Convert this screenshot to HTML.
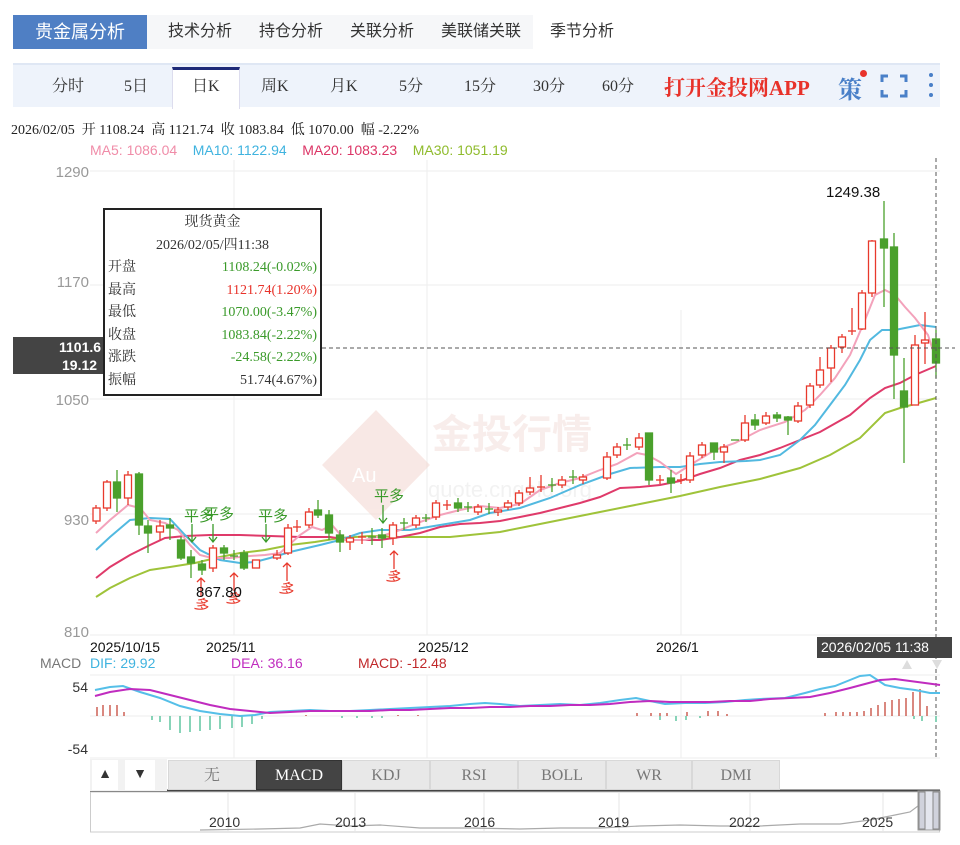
<!DOCTYPE html>
<html><head><meta charset="utf-8"><style>
*{margin:0;padding:0;box-sizing:border-box}
body{width:960px;height:845px;background:#fff;position:relative;overflow:hidden;font-family:"Liberation Serif","Noto Serif CJK SC",serif;color:#333}
.abs{position:absolute}
.topbar{left:13px;top:15px;width:520px;height:34px;background:#f6f7f9}
.toptab{left:13px;top:15px;width:134px;height:34px;background:#4f7fc4;color:#fff;font-size:18px;line-height:34px;text-align:center;font-family:"Liberation Sans","Noto Sans CJK SC",sans-serif}
.topitem{top:15px;line-height:34px;font-size:16px;font-family:"Liberation Sans","Noto Sans CJK SC",sans-serif;color:#333}
.pbar{left:13px;top:63px;width:927px;height:44px;background:#eef3fb;border-top:2px solid #dfe7f4}
.pitem{top:75px;font-size:16px;line-height:24px}
.active{left:172px;top:67px;width:68px;height:42px;background:#fff;border-top:3px solid #1e2a78;border-left:1px solid #dde;border-right:1px solid #dde}
.sans{font-family:"Liberation Sans",sans-serif}
.tab{top:760px;height:30px;background:#e8e8e8;border:1px solid #d8d8d8;font-size:16px;line-height:30px;text-align:center;color:#777}
</style></head><body>
<div class="abs topbar"></div>
<div class="abs toptab">贵金属分析</div>
<div class="abs topitem" style="left:168px">技术分析</div>
<div class="abs topitem" style="left:259px">持仓分析</div>
<div class="abs topitem" style="left:350px">关联分析</div>
<div class="abs topitem" style="left:441px">美联储关联</div>
<div class="abs topitem" style="left:550px">季节分析</div>

<div class="abs pbar"></div>
<div class="abs active"></div>
<div class="abs pitem" style="left:52px">分时</div>
<div class="abs pitem" style="left:124px">5日</div>
<div class="abs pitem" style="left:192px">日K</div>
<div class="abs pitem" style="left:261px">周K</div>
<div class="abs pitem" style="left:330px">月K</div>
<div class="abs pitem" style="left:399px">5分</div>
<div class="abs pitem" style="left:464px">15分</div>
<div class="abs pitem" style="left:533px">30分</div>
<div class="abs pitem" style="left:602px">60分</div>
<div class="abs" style="left:664px;top:72px;font-size:21px;font-weight:bold;color:#e8322a">打开金投网APP</div>
<div class="abs" style="left:838px;top:70px;font-size:24px;color:#4a80c8;font-weight:bold">策</div>
<div class="abs" style="left:860px;top:70px;width:7px;height:7px;border-radius:50%;background:#e8322a"></div>
<svg class="abs" style="left:880px;top:74px" width="28" height="24"><path d="M2 8V2h6M20 2h6v6M26 16v6h-6M8 22H2v-6" stroke="#4a80c8" stroke-width="3" fill="none"/></svg>
<svg class="abs" style="left:926px;top:72px" width="10" height="26"><circle cx="5" cy="3" r="2" fill="#4a80c8"/><circle cx="5" cy="13" r="2" fill="#4a80c8"/><circle cx="5" cy="23" r="2" fill="#4a80c8"/></svg>

<div class="abs" style="left:11px;top:119px;font-size:14px;color:#222">2026/02/05&nbsp; 开 1108.24&nbsp; 高 1121.74&nbsp; 收 1083.84&nbsp; 低 1070.00&nbsp; 幅 -2.22%</div>
<div class="abs sans" style="left:90px;top:142px;font-size:14px;white-space:nowrap"><span style="color:#f08ca8">MA5: 1086.04</span>&nbsp;&nbsp;&nbsp; <span style="color:#3fb3df">MA10: 1122.94</span>&nbsp;&nbsp;&nbsp; <span style="color:#dc3566">MA20: 1083.23</span>&nbsp;&nbsp;&nbsp; <span style="color:#8fbb2c">MA30: 1051.19</span></div>

<svg class="abs" style="left:0;top:0" width="960" height="845" font-family="Liberation Sans,sans-serif">
<g stroke="#eee" stroke-width="1">
<line x1="90" y1="171" x2="940" y2="171"/><line x1="90" y1="285" x2="940" y2="285"/><line x1="90" y1="399" x2="940" y2="399"/><line x1="90" y1="514" x2="940" y2="514"/><line x1="90" y1="635" x2="940" y2="635"/>
<line x1="234" y1="160" x2="234" y2="635"/><line x1="427" y1="160" x2="427" y2="635"/><line x1="681" y1="310" x2="681" y2="635"/>
<line x1="90" y1="675" x2="940" y2="675"/><line x1="90" y1="758" x2="940" y2="758"/>
<line x1="234" y1="675" x2="234" y2="758"/><line x1="427" y1="675" x2="427" y2="758"/><line x1="681" y1="675" x2="681" y2="758"/>
</g>
<g fill="#999" font-size="15" text-anchor="end"><text x="89" y="177">1290</text><text x="89" y="287">1170</text><text x="89" y="405">1050</text><text x="89" y="525">930</text><text x="89" y="637">810</text></g>
<!-- watermark -->
<g opacity="0.5">
<path d="M376 410 L430 465 L376 520 L322 465Z" fill="#f3d3cc"/>
<text x="432" y="448" font-size="40" fill="#f3dcd8" font-family="Noto Sans CJK SC,sans-serif" font-weight="bold">金投行情</text>
<text x="428" y="497" font-size="22" fill="#e6e6e6">quote.cngold.org</text>
<text x="352" y="482" font-size="20" fill="#fff">Au</text>
</g>
<!-- MA lines -->
<g fill="none" stroke-width="2">
<polyline stroke="#9fc33a" points="96,597 110,588 130,578 150,570 170,567 195,563 220,557 240,553 265,550 290,545 315,542 340,538 370,536 400,537 430,537 450,537 480,534 500,532 530,526 560,520 600,512 640,504 680,496 720,487 760,479 800,468 830,455 860,438 885,413 900,408 915,404 936,398"/>
<polyline stroke="#df3a6a" points="96,578 110,567 130,555 150,545 165,538 185,536 210,535 240,535 270,536 300,537 330,537 350,540 380,540 400,537 420,533 440,527 460,524 480,523 500,521 520,517 540,513 560,508 580,503 600,497 620,488 640,487 660,485 680,481 700,474 720,468 740,460 760,455 780,448 800,440 820,432 850,415 870,398 885,388 900,383 915,375 936,366"/>
<polyline stroke="#52b9e0" points="96,550 110,537 130,520 150,518 170,519 185,535 200,550 220,560 240,563 255,562 270,558 290,552 320,545 340,540 360,533 380,530 410,530 440,525 470,520 490,513 520,508 550,498 580,485 610,474 630,468 660,467 680,467 700,464 720,462 746,461 760,460 780,455 800,440 815,425 830,405 845,385 860,360 870,340 882,330 895,330 905,328 920,325 936,327"/>
<polyline stroke="#f3a2bb" points="96,533 110,520 128,505 140,508 150,520 165,523 178,530 190,545 200,555 212,558 230,558 250,556 265,555 280,553 300,535 312,527 322,530 332,525 345,540 365,540 385,535 400,530 420,522 440,515 460,510 480,506 500,508 520,504 540,490 560,483 580,478 600,470 617,464 637,453 647,455 660,462 676,474 695,462 715,450 735,443 760,430 785,422 805,410 820,395 835,378 850,355 865,320 875,295 885,290 895,295 905,307 915,318 928,335 936,360"/>
</g>
<!-- candles red -->
<g stroke="#e8392c" stroke-width="1.3" fill="#fff">
<line x1="96" y1="505" x2="96" y2="524"/><rect x="93" y="508" width="7" height="13"/>
<line x1="107" y1="480" x2="107" y2="511"/><rect x="103.5" y="482" width="7" height="26"/>
<line x1="128" y1="471" x2="128" y2="505"/><rect x="124.5" y="475" width="7" height="23"/>
<line x1="160" y1="520" x2="160" y2="540"/><rect x="156.5" y="526" width="7" height="6"/>
<line x1="213" y1="545" x2="213" y2="572"/><rect x="209.5" y="548" width="7" height="20"/>
<rect x="252.5" y="560" width="7" height="8"/>
<line x1="277" y1="550" x2="277" y2="560"/><rect x="273.5" y="555" width="7" height="3"/>
<line x1="288" y1="524" x2="288" y2="555"/><rect x="284.5" y="528" width="7" height="25"/>
<line x1="297" y1="520" x2="297" y2="532"/><line x1="293" y1="527" x2="301" y2="527"/>
<line x1="309" y1="508" x2="309" y2="528"/><rect x="305.5" y="512" width="7" height="13"/>
<line x1="350" y1="535" x2="350" y2="550"/><rect x="346.5" y="538" width="7" height="4"/>
<line x1="362" y1="532" x2="362" y2="544"/><line x1="358" y1="537" x2="366" y2="537"/>
<line x1="393" y1="522" x2="393" y2="545"/><rect x="389.5" y="525" width="7" height="13"/>
<line x1="416" y1="515" x2="416" y2="528"/><rect x="412.5" y="518" width="7" height="7"/>
<line x1="436" y1="500" x2="436" y2="520"/><rect x="432.5" y="503" width="7" height="14"/>
<line x1="447" y1="500" x2="447" y2="510"/><line x1="443" y1="505" x2="451" y2="505"/>
<line x1="478" y1="504" x2="478" y2="515"/><rect x="474.5" y="507" width="7" height="5"/>
<line x1="498" y1="507" x2="498" y2="516"/><rect x="494.5" y="510" width="7" height="2"/>
<line x1="508" y1="500" x2="508" y2="510"/><rect x="504.5" y="503" width="7" height="4"/>
<line x1="519" y1="490" x2="519" y2="506"/><rect x="515.5" y="493" width="7" height="10"/>
<line x1="530" y1="477" x2="530" y2="495"/><rect x="526.5" y="488" width="7" height="4"/>
<line x1="541" y1="475" x2="541" y2="492"/><line x1="537" y1="487" x2="545" y2="487"/>
<line x1="562" y1="476" x2="562" y2="488"/><rect x="558.5" y="480" width="7" height="5"/>
<line x1="583" y1="474" x2="583" y2="484"/><rect x="579.5" y="477" width="7" height="3"/>
<line x1="607" y1="452" x2="607" y2="480"/><rect x="603.5" y="457" width="7" height="21"/>
<line x1="617" y1="443" x2="617" y2="458"/><rect x="613.5" y="447" width="7" height="8"/>
<line x1="639" y1="433" x2="639" y2="450"/><rect x="635.5" y="438" width="7" height="9"/>
<line x1="660" y1="475" x2="660" y2="484"/><line x1="656" y1="480" x2="664" y2="480"/>
<line x1="681" y1="474" x2="681" y2="484"/><line x1="677" y1="480" x2="685" y2="480"/>
<line x1="690" y1="452" x2="690" y2="483"/><rect x="686.5" y="456" width="7" height="24"/>
<line x1="702" y1="442" x2="702" y2="458"/><rect x="698.5" y="445" width="7" height="10"/>
<line x1="724" y1="444" x2="724" y2="463"/><rect x="720.5" y="447" width="7" height="5"/>
<line x1="745" y1="415" x2="745" y2="442"/><rect x="741.5" y="423" width="7" height="17"/>
<line x1="766" y1="412" x2="766" y2="425"/><rect x="762.5" y="416" width="7" height="7"/>
<line x1="798" y1="402" x2="798" y2="423"/><rect x="794.5" y="406" width="7" height="15"/>
<line x1="810" y1="383" x2="810" y2="408"/><rect x="806.5" y="386" width="7" height="19"/>
<line x1="820" y1="357" x2="820" y2="388"/><rect x="816.5" y="370" width="7" height="15"/>
<line x1="831" y1="345" x2="831" y2="382"/><rect x="827.5" y="348" width="7" height="20"/>
<line x1="842" y1="334" x2="842" y2="353"/><rect x="838.5" y="337" width="7" height="10"/>
<line x1="852" y1="308" x2="852" y2="335"/><line x1="848" y1="331" x2="856" y2="331"/>
<line x1="862" y1="290" x2="862" y2="330"/><rect x="858.5" y="293" width="7" height="36"/>
<line x1="872" y1="240" x2="872" y2="297"/><rect x="868.5" y="241" width="7" height="52"/>
<line x1="915" y1="335" x2="915" y2="405"/><rect x="911.5" y="345" width="7" height="60"/>
<line x1="925" y1="312" x2="925" y2="364"/><rect x="921.5" y="340" width="7" height="3"/>
</g>
<!-- candles green -->
<g stroke="#4aa02c" stroke-width="1.3" fill="#4aa02c">
<line x1="117" y1="470" x2="117" y2="512"/><rect x="113.5" y="482" width="7" height="16"/>
<line x1="139" y1="472" x2="139" y2="535"/><rect x="135.5" y="474" width="7" height="51"/>
<line x1="148" y1="520" x2="148" y2="553"/><rect x="144.5" y="526" width="7" height="7"/>
<line x1="170" y1="518" x2="170" y2="540"/><rect x="166.5" y="525" width="7" height="3"/>
<line x1="181" y1="537" x2="181" y2="560"/><rect x="177.5" y="540" width="7" height="18"/>
<line x1="191" y1="550" x2="191" y2="578"/><rect x="187.5" y="557" width="7" height="6"/>
<line x1="202" y1="560" x2="202" y2="575"/><rect x="198.5" y="564" width="7" height="6"/>
<line x1="224" y1="545" x2="224" y2="560"/><rect x="220.5" y="548" width="7" height="5"/>
<line x1="234" y1="550" x2="234" y2="560"/><line x1="230" y1="556" x2="238" y2="556"/>
<line x1="244" y1="550" x2="244" y2="570"/><rect x="240.5" y="553" width="7" height="15"/>
<line x1="318" y1="500" x2="318" y2="518"/><rect x="314.5" y="510" width="7" height="5"/>
<line x1="329" y1="510" x2="329" y2="540"/><rect x="325.5" y="515" width="7" height="18"/>
<line x1="340" y1="530" x2="340" y2="552"/><rect x="336.5" y="535" width="7" height="7"/>
<line x1="372" y1="528" x2="372" y2="545"/><line x1="368" y1="537" x2="376" y2="537"/>
<line x1="382" y1="528" x2="382" y2="548"/><rect x="378.5" y="535" width="7" height="3"/>
<line x1="404" y1="518" x2="404" y2="530"/><line x1="400" y1="523" x2="408" y2="523"/>
<line x1="426" y1="514" x2="426" y2="522"/><line x1="422" y1="518" x2="430" y2="518"/>
<line x1="458" y1="498" x2="458" y2="512"/><rect x="454.5" y="503" width="7" height="5"/>
<line x1="468" y1="502" x2="468" y2="512"/><line x1="464" y1="507" x2="472" y2="507"/>
<line x1="489" y1="503" x2="489" y2="514"/><line x1="485" y1="509" x2="493" y2="509"/>
<line x1="552" y1="478" x2="552" y2="492"/><line x1="548" y1="485" x2="556" y2="485"/>
<line x1="573" y1="470" x2="573" y2="484"/><line x1="569" y1="477" x2="577" y2="477"/>
<line x1="627" y1="438" x2="627" y2="450"/><line x1="623" y1="445" x2="631" y2="445"/>
<line x1="649" y1="433" x2="649" y2="485"/><rect x="645.5" y="433" width="7" height="47"/>
<line x1="671" y1="470" x2="671" y2="493"/><rect x="667.5" y="478" width="7" height="5"/>
<line x1="714" y1="443" x2="714" y2="460"/><rect x="710.5" y="443" width="7" height="9"/>
<line x1="735" y1="440" x2="735" y2="440"/><line x1="731" y1="440" x2="739" y2="440"/>
<line x1="755" y1="414" x2="755" y2="430"/><rect x="751.5" y="420" width="7" height="5"/>
<line x1="777" y1="412" x2="777" y2="422"/><rect x="773.5" y="415" width="7" height="3"/>
<line x1="788" y1="416" x2="788" y2="435"/><rect x="784.5" y="417" width="7" height="3"/>
<line x1="884" y1="201" x2="884" y2="307"/><rect x="880.5" y="239" width="7" height="9"/>
<line x1="894" y1="233" x2="894" y2="399"/><rect x="890.5" y="247" width="7" height="108"/>
<line x1="904" y1="358" x2="904" y2="463"/><rect x="900.5" y="391" width="7" height="16"/>
<line x1="936" y1="330" x2="936" y2="378"/><rect x="932.5" y="339" width="7" height="24"/>
</g>
<!-- annotations -->
<g font-family="Noto Sans CJK SC,sans-serif" font-size="15">
<g fill="#3a9a2a"><text x="184" y="521">平多</text><text x="204" y="519">平多</text><text x="258" y="521">平多</text><text x="374" y="501">平多</text></g>
<g stroke="#3a9a2a" stroke-width="1.3" fill="none"><path d="M192 524v18M188 537l4 5 4-5M213 524v18M209 537l4 5 4-5M266 524v18M262 537l4 5 4-5M383 505v18M379 518l4 5 4-5"/></g>
<g stroke="#e8392c" stroke-width="1.3" fill="none"><path d="M201 578v18M197 582l4-4 4 4M234 573v18M230 577l4-4 4 4M287 563v18M283 567l4-4 4 4M394 551v18M390 555l4-4 4 4"/></g>
<g fill="#e8392c"><text x="195" y="610" transform="rotate(20 202 604)">多</text><text x="227" y="604" transform="rotate(20 234 598)">多</text><text x="280" y="594" transform="rotate(20 287 588)">多</text><text x="387" y="582" transform="rotate(20 394 576)">多</text></g>
</g>
<text x="196" y="597" font-size="15" fill="#111">867.80</text>
<text x="826" y="197" font-size="15" fill="#111">1249.38</text>
<!-- crosshair -->
<line x1="322" y1="348" x2="955" y2="348" stroke="#555" stroke-dasharray="4,3"/>
<line x1="936" y1="158" x2="936" y2="760" stroke="#555" stroke-dasharray="4,3"/>
<rect x="13" y="337" width="95" height="37" fill="#444"/>
<g fill="#fff" font-size="14" font-weight="bold"><text x="59" y="352">1101.6</text><text x="62" y="370">19.12</text></g>
<!-- date axis -->
<g font-size="14" fill="#111"><text x="90" y="652">2025/10/15</text><text x="206" y="652">2025/11</text><text x="418" y="652">2025/12</text><text x="656" y="652">2026/1</text></g>
<rect x="817" y="637" width="135" height="21" fill="#444"/><text x="821" y="652" font-size="14" fill="#fff">2026/02/05 11:38</text>
<path d="M902 669l5-9 5 9zM932 660l5 9 5-9z" fill="#ddd"/>
<!-- MACD legend -->
<g font-size="14"><text x="40" y="668" fill="#777">MACD</text><text x="90" y="668" fill="#3fb3df">DIF: 29.92</text><text x="231" y="668" fill="#c02cbf">DEA: 36.16</text><text x="358" y="668" fill="#c0282a">MACD: -12.48</text></g>
<g font-size="14" fill="#333" text-anchor="end"><text x="88" y="692">54</text><text x="88" y="754">-54</text></g>
<line x1="90" y1="716" x2="940" y2="716" stroke="#eee"/>
<g stroke="#c0392b" stroke-width="1.2"><path d="M97 716v-9M103 716v-11M110 716v-11M117 716v-11M124 716v-4M306 716v-1M398 716v-1M418 716v-1M637 716v-3M651 716v-3M660 716v-3M667 716v-3M687 716v-4M708 716v-5M718 716v-5M727 716v-2M825 716v-3M836 716v-4M843 716v-4M850 716v-4M857 716v-4M864 716v-5M871 716v-8M878 716v-11M885 716v-14M892 716v-16M899 716v-17M906 716v-18M913 716v-24M920 716v-27M927 716v-10"/></g>
<g stroke="#3ab88a" stroke-width="1.2"><path d="M152 716v4M160 716v6M170 716v14M180 716v17M190 716v16M200 716v15M210 716v14M220 716v13M232 716v12M242 716v11M252 716v8M262 716v3M342 716v2M357 716v2M372 716v2M382 716v2M660 716v4M676 716v5M686 716v4M700 716v2M914 716v3M922 716v5M936 716v6"/></g>
<g fill="none" stroke-width="2">
<path stroke="#55bfe8" d="M95 690 L110 687 L123 686 L140 692 L160 698 L180 706 L200 711 L220 714 L240 716 L255 715 L270 712 L290 711 L310 710 L330 711 L350 711 L370 710 L390 709 L410 708 L430 707 L450 706 L470 704 L485 703 L500 704 L520 706 L540 705 L560 704 L580 705 L600 703 L620 700 L636 698 L650 701 L665 704 L685 703 L705 703 L725 702 L745 700 L760 699 L785 698 L805 693 L820 689 L835 686 L850 680 L860 676 L870 675 L885 685 L900 688 L915 690 L930 693 L940 693"/>
<path stroke="#c02cbf" d="M95 696 L110 692 L130 689 L150 690 L170 695 L190 700 L210 705 L230 709 L250 711 L270 713 L290 712 L310 711 L330 711 L350 711 L370 711 L390 710 L410 710 L430 709 L450 708 L470 708 L490 707 L510 707 L530 706 L550 706 L570 705 L590 705 L610 704 L630 702 L650 701 L670 702 L690 702 L710 702 L730 701 L750 701 L770 699 L790 698 L810 697 L830 693 L850 688 L865 684 L880 680 L895 679 L910 681 L925 683 L940 685"/>
</g>
<!-- navigator -->
<line x1="90" y1="791" x2="940" y2="791" stroke="#444" stroke-width="3"/>
<rect x="90.5" y="792" width="849" height="40" fill="#fff" stroke="#ccc"/>
<g stroke="#e6e6e6"><path d="M228 792v40M355 792v40M484 792v40M619 792v40M750 792v40M883 792v40"/></g>
<path d="M200 830 L260 829 L300 828 L320 824 L350 826 L380 825 L420 828 L470 828 L520 829 L560 828 L600 828 L640 826 L680 825 L720 826 L760 826 L800 824 L840 824 L870 820 L895 815 L910 812 L918 806 L924 798" fill="none" stroke="#aaa" stroke-width="1.2"/>
<g font-size="14" fill="#333"><text x="209" y="827">2010</text><text x="335" y="827">2013</text><text x="464" y="827">2016</text><text x="598" y="827">2019</text><text x="729" y="827">2022</text><text x="862" y="827">2025</text></g>
<rect x="918" y="791" width="22" height="39" fill="#e4e6ee" stroke="#999"/>
<rect x="919" y="792" width="6" height="37" fill="#d0d2dc" stroke="#888"/><rect x="933" y="792" width="6" height="37" fill="#d0d2dc" stroke="#888"/>
</svg>

<!-- MACD tab bar -->
<div class="abs" style="left:90px;top:759px;width:77px;height:32px;background:#f2f2f2"></div>
<div class="abs" style="left:92px;top:760px;width:26px;height:30px;background:#fff;text-align:center;line-height:30px;font-size:14px">▲</div>
<div class="abs" style="left:125px;top:760px;width:30px;height:30px;background:#fff;text-align:center;line-height:30px;font-size:14px">▼</div>
<div class="abs tab" style="left:168px;width:88px">无</div>
<div class="abs tab" style="left:256px;width:86px;background:#444;color:#fff;border-color:#333">MACD</div>
<div class="abs tab" style="left:342px;width:88px">KDJ</div>
<div class="abs tab" style="left:430px;width:88px">RSI</div>
<div class="abs tab" style="left:518px;width:88px">BOLL</div>
<div class="abs tab" style="left:606px;width:86px">WR</div>
<div class="abs tab" style="left:692px;width:88px">DMI</div>

<!-- tooltip -->
<div class="abs" style="left:103px;top:208px;width:219px;height:188px;background:#fff;border:2px solid #222;font-size:14px;line-height:22.5px">
<div style="text-align:center;margin-top:2px">现货黄金</div>
<div style="text-align:center">2026/02/05/四11:38</div>
<div style="display:flex;justify-content:space-between;padding:0 3px"><span>开盘</span><span style="color:#3a9a2a">1108.24(-0.02%)</span></div>
<div style="display:flex;justify-content:space-between;padding:0 3px"><span>最高</span><span style="color:#e8322a">1121.74(1.20%)</span></div>
<div style="display:flex;justify-content:space-between;padding:0 3px"><span>最低</span><span style="color:#3a9a2a">1070.00(-3.47%)</span></div>
<div style="display:flex;justify-content:space-between;padding:0 3px"><span>收盘</span><span style="color:#3a9a2a">1083.84(-2.22%)</span></div>
<div style="display:flex;justify-content:space-between;padding:0 3px"><span>涨跌</span><span style="color:#3a9a2a">-24.58(-2.22%)</span></div>
<div style="display:flex;justify-content:space-between;padding:0 3px"><span>振幅</span><span>51.74(4.67%)</span></div>
</div>
</body></html>
